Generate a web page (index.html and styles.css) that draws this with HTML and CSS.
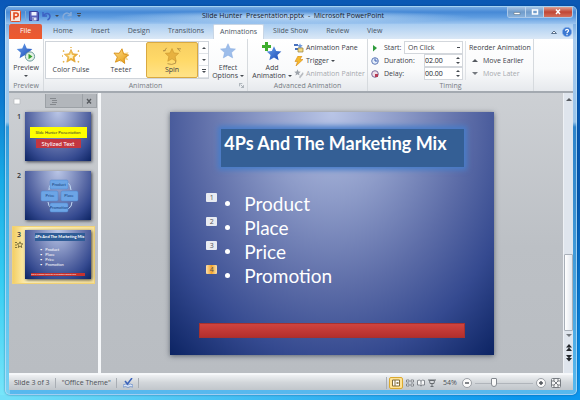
FILE: index.html
```html
<!DOCTYPE html>
<html lang="en">
<head>
<meta charset="utf-8">
<title>Slide Hunter Presentation.pptx - Microsoft PowerPoint</title>
<link rel="stylesheet" href="styles.css">
</head>
<body>
<svg class="defs" aria-hidden="true">
  <defs>
    <linearGradient id="blue" x1="0" y1="0" x2="1" y2="1"><stop offset="0" stop-color="#6ba4ee"/><stop offset="1" stop-color="#1746b4"/></linearGradient>
    <linearGradient id="gold" x1="0" y1="0" x2="1" y2="1"><stop offset="0" stop-color="#ffe08a"/><stop offset="1" stop-color="#e59a10"/></linearGradient>
    <symbol id="star" viewBox="0 0 20 20"><path d="M10 1l2.7 6 6.5.6-4.9 4.4 1.5 6.5L10 15.100l-5.800 3.400 1.500-6.500L.8 7.600 7.300 7z"/></symbol>
  </defs>
</svg>
<div class="window">
  <header class="titlebar">
    <div class="quick">
      <svg class="i12" viewBox="0 0 12 12"><rect x=".5" y=".5" width="10" height="11" rx="1" fill="#fbe6dc" stroke="#d9512c"/><path d="M4 9.500V3h2.300a1.800 1.800 0 010 3.800H4" fill="none" stroke="#e0481e" stroke-width="1.600"/></svg>
      <span class="qsep"></span>
      <button aria-label="Save"><svg class="i10" viewBox="0 0 10 10"><path d="M.5.5h8l1 1v8h-9z" fill="#5a62bb" stroke="#38419c"/><path d="M2.500 1h5v3.500h-5z" fill="#eef3ff"/><path d="M3 6.500h4.500V9.500H3z" fill="#dce3f6"/><path d="M3.500 7h1v2h-1z" fill="#38419c"/></svg></button>
      <button aria-label="Undo"><svg class="i10" viewBox="0 0 10 10"><path d="M1 1v4h4M1.500 4.500C4 1.500 8 2 8 5.500 8 7.500 6.500 8.500 5.500 9" fill="none" stroke="#3d62c4" stroke-width="1.500"/></svg></button>
      <i class="down"></i>
      <button aria-label="Redo"><svg class="i10" viewBox="0 0 10 10"><path d="M9 1v3.500H5.500M8.500 4A4 4 0 109 7" fill="none" stroke="#86abd8" stroke-width="1.500"/></svg></button>
      <i class="down bar"></i>
    </div>
    <h1>Slide Hunter  Presentation.pptx  -  Microsoft PowerPoint</h1>
    <div class="winbtns">
      <button aria-label="Minimize"><svg viewBox="0 0 10 8"><path d="M2 4.500h6v2H2z" fill="#fff" stroke="#567" stroke-width=".5"/></svg></button>
      <button aria-label="Restore"><svg viewBox="0 0 10 8"><path d="M2.500 2h5v4h-5z" fill="none" stroke="#fff" stroke-width="1.500"/></svg></button>
      <button class="close" aria-label="Close"><svg viewBox="0 0 10 8"><path d="M3 1.500l4 4.500M7 1.500L3 6" stroke="#fff" stroke-width="1.500"/></svg></button>
    </div>
  </header>
  <nav class="tabs">
    <a class="file" href="#file">File</a>
    <a href="#home">Home</a><a href="#insert">Insert</a><a href="#design">Design</a><a href="#transitions">Transitions</a>
    <a class="on" href="#animations">Animations</a><a href="#show">Slide Show</a><a href="#review">Review</a><a href="#view">View</a>
    <div class="help">
      <button aria-label="Minimize the ribbon"><svg class="i8" viewBox="0 0 8 8"><path d="M1.500 5.500L4 3l2.500 2.500z" fill="#fff" stroke="#5d738e"/></svg></button>
      <button aria-label="Help"><svg class="i10" viewBox="0 0 10 10"><circle cx="5" cy="5" r="4.700" fill="#3b78d2" stroke="#8db6ec" stroke-width=".6"/><path d="M3.500 3.800C3.600 2 6.600 2 6.500 3.800 6.500 4.800 5 4.900 5 6.200M5 7v1.200" fill="none" stroke="#fff" stroke-width="1.200"/></svg></button>
    </div>
  </nav>

  <section class="ribbon">
    <div class="group preview">
      <div class="body">
        <button class="big"><svg class="i20" viewBox="0 0 20 20"><use href="#star" width="17" height="18" fill="url(#blue)"/><circle cx="14" cy="14.500" r="4.600" fill="#e4f1e4" stroke="#6b9a9d"/><path d="M12.500 11.800l4 2.700-4 2.700z" fill="#35a02d"/></svg><span>Preview</span><i class="down"></i></button>
      </div>
      <h2>Preview</h2>
    </div>
    <div class="group anim">
      <div class="body">
        <div class="gallery">
          <button><svg class="i18" viewBox="0 0 20 20"><use href="#star" x="2" y="2" width="16" height="16" fill="url(#gold)" stroke="#dda032"/><use href="#star" x="6" y="6" width="8" height="8" fill="#fff6cf"/><path d="M10 0v1M1 4l1.500 1M19 4l-1.500 1M1 17l1.500-1M19 17l-1.500-1M0 10h1M19 10h1" stroke="#e5ad3c" stroke-width="1.500"/></svg><span>Color Pulse</span></button>
          <button><svg class="i18" viewBox="0 0 20 20"><use href="#star" x="4" y="1" width="16" height="18" fill="#f4d486" transform="rotate(-15 10 10)"/><use href="#star" x="1" y="1" width="18" height="18" fill="url(#gold)" stroke="#d68c14" transform="rotate(8 10 10)"/></svg><span>Teeter</span></button>
          <button class="sel"><svg class="i18" viewBox="0 0 20 20"><use href="#star" x="2" y="1" width="16" height="16" fill="#e7b140" stroke="#cf9a32"/><path d="M1 5l3-4M0 4h3M19 5l-3-4M20 2h-4M5 18.500q5 2 9-.5M14 15v3" fill="none" stroke="#b08d45"/></svg><span>Spin</span></button>
          <div class="scroll">
            <button aria-label="Previous row"><i class="up"></i></button><button aria-label="Next row"><i class="down"></i></button><button aria-label="More"><i class="down bar"></i></button>
          </div>
        </div>
        <button class="big effect"><svg class="i18" viewBox="0 0 20 20"><use href="#star" x="1" y="1" width="18" height="18" fill="#9dbdea" stroke="#85aadf" stroke-width=".6"/></svg><span>Effect</span><span>Options <i class="down"></i></span></button>
      </div>
      <h2>Animation</h2>
      <svg class="launch" viewBox="0 0 6 6"><path d="M.5 4V.5H4M2 2l3 3M5.500 2.500v3h-3" fill="none" stroke="#8a929c" stroke-width=".8"/></svg>
    </div>
    <div class="group adv">
      <div class="body">
        <button class="big add"><svg class="i20" viewBox="0 0 20 20"><use href="#star" x="4" y="3" width="16" height="17" fill="url(#blue)"/><path d="M4.500 0v9M0 4.500h9" stroke="#3fae2e" stroke-width="3"/></svg><span>Add</span><span>Animation <i class="down"></i></span></button>
        <div class="rows">
          <button><svg class="i10" viewBox="0 0 10 10"><path d="M0 1h4v2H0zM1 5h3v2H1z" fill="#4771bd"/><use href="#star" x="3" y="0" width="6" height="6" fill="#6d98dc"/><path d="M4 5h5v4H4z" fill="#f5d980" stroke="#94803e" stroke-width=".7"/></svg>Animation Pane</button>
          <button><svg class="i10" viewBox="0 0 10 10"><path d="M4 0h4L6 3.500h3L2 10l1.500-4.500H1z" fill="#f5b92d" stroke="#d58a1b" stroke-width=".6"/></svg>Trigger <i class="down"></i></button>
          <button disabled><svg class="i10" viewBox="0 0 10 10"><use href="#star" width="7" height="7" fill="#9ea4ab"/><path d="M9 3L5 8l1 1.500L9.500 5z" fill="#b7bbc0"/></svg>Animation Painter</button>
        </div>
      </div>
      <h2>Advanced Animation</h2>
    </div>
    <div class="group timing">
      <div class="body">
        <div class="fields">
          <label for="start"><svg class="i8" viewBox="0 0 8 8"><path d="M2 1l4 3-4 3.500z" fill="#2f9b3c"/></svg>Start:</label>
          <select id="start"><option>On Click</option></select>
          <label for="dur"><svg class="i8" viewBox="0 0 8 8"><circle cx="4" cy="4" r="3.300" fill="#e3edfb" stroke="#6079b5"/><path d="M4 1.500V4h2.500" fill="none" stroke="#3a5db0"/></svg>Duration:</label>
          <div class="spin"><input id="dur" value="02.00"><span><i class="up"></i><i class="down"></i></span></div>
          <label for="del"><svg class="i8" viewBox="0 0 8 8"><circle cx="4" cy="4" r="3.300" fill="#f0dfe8" stroke="#7d6c9c"/><path d="M4 1v3h3v3H4z" fill="#b63b54"/></svg>Delay:</label>
          <div class="spin"><input id="del" value="00.00"><span><i class="up"></i><i class="down"></i></span></div>
        </div>
        <div class="rows reorder">
          <span>Reorder Animation</span>
          <button><i class="tri"></i>Move Earlier</button>
          <button disabled><i class="tri flip"></i>Move Later</button>
        </div>
      </div>
      <h2>Timing</h2>
    </div>
  </section>

  <main class="work">
    <aside class="side">
      <div class="sidetabs">
        <button class="on" aria-label="Slides"><svg class="i8" viewBox="0 0 8 8"><path d="M1 2h6v5H1z" fill="#fff" stroke="#b4b7bb" stroke-width=".7"/></svg></button>
        <button aria-label="Outline"><svg class="i8" viewBox="0 0 8 8"><path d="M0 1.500h6M2 3.500h5M2 5.500h5M0 7.500h6" stroke="#85898e"/></svg></button>
        <button class="x" aria-label="Close pane"><svg class="i8" viewBox="0 0 8 8"><path d="M2 2l4 4.500M6 2L2 6.500" stroke="#55595e" stroke-width="1.300"/></svg></button>
      </div>
      <ol class="thumbs">
        <li><b>1</b><div class="mini m1"><span class="yel">Slide Hunter Presentation</span><span class="red">Stylized Text</span></div></li>
        <li><b>2</b><div class="mini m2"><svg viewBox="0 0 66 49"><path d="M24 19q0-6 5-8M42 11q4 3 4 8M23 31q0 4 4 7M47 31q0 5-4 7" fill="none" stroke="#c3dcf5"/><g fill="#6ca5e6" stroke="#4d85cf" stroke-width=".5"><rect x="25" y="9" width="18" height="9" rx="1.500"/><rect x="16" y="20" width="17" height="10" rx="1.500"/><rect x="36" y="20" width="17" height="10" rx="1.500"/><rect x="25" y="32" width="18" height="9" rx="1.500"/></g><g class="nodes"><text x="34" y="15">Product</text><text x="25" y="26">Price</text><text x="44" y="26">Place</text><text x="34" y="38">Promotion</text></g></svg></div></li>
        <li class="cur"><b>3<svg class="i8" viewBox="0 0 8 8"><path d="M5 .8l.8 2 2 .1-1.600 1.400.6 2.200L5 5.300 3.200 6.500l.6-2.200L2.200 2.900l2-.1zM0 1.500h2M0 4h2M0 6.500h2" fill="none" stroke="#665a2c" stroke-width=".8"/></svg></b><div class="mini m3"><span class="mt">4Ps And The Marketing Mix</span><ul><li>Product</li><li>Place</li><li>Price</li><li>Promotion</li></ul><span class="mb">This is a sample text with an animation applied here</span></div></li>
      </ol>
    </aside>
    <div class="stage">
      <article class="slide">
        <h3>4Ps And The Marketing Mix</h3>
        <ul class="points">
          <li><em>1</em><span>Product</span></li>
          <li><em>2</em><span>Place</span></li>
          <li><em>3</em><span>Price</span></li>
          <li><em class="hot">4</em><span>Promotion</span></li>
        </ul>
        <div class="strip"></div>
      </article>
    </div>
    <div class="vbar">
      <i class="tri"></i>
      <div class="track"><div class="thumb"></div></div>
      <i class="tri flip"></i>
      <svg viewBox="0 0 8 24"><path d="M4 4L7 7.500H1zM4 7.500L7 11H1zM1 15h6L4 18.500zM1 18h6L4 21.500z" fill="#23272c"/></svg>
    </div>
  </main>

  <footer class="status">
    <span>Slide 3 of 3</span><span>"Office Theme"</span>
    <span class="proof"><svg class="i10" viewBox="0 0 10 10"><path d="M0 7q3-2 5 0 2-2 5 0v2Q7 8 5 9.500 3 8 0 9z" fill="#dbe6f8" stroke="#5c82c1" stroke-width=".7"/><path d="M2 3l2.500 3L9 0" fill="none" stroke="#3a62ba" stroke-width="1.500"/></svg></span>
    <div class="views">
      <button class="on" aria-label="Normal"><svg class="i8" viewBox="0 0 8 8"><path d="M.5 1h7v6h-7zM3 1v6" fill="#fff" stroke="#836c37"/><path d="M4.500 3h2v2h-2z" fill="#94835a"/></svg></button>
      <button aria-label="Slide Sorter"><svg class="i8" viewBox="0 0 8 8"><path d="M.5 1h2.500v2H.5zM5 1h2.500v2H5zM.5 5h2.500v2H.5zM5 5h2.500v2H5z" fill="#fff" stroke="#6b7076" stroke-width=".8"/></svg></button>
      <button aria-label="Reading View"><svg class="i8" viewBox="0 0 8 8"><path d="M.5 1.500q2-1 3.500.5 1.500-1.500 3.500-.5V6Q5.500 5.500 4 7 2.500 5.500.5 6zM4 2v5" fill="#f7f8f9" stroke="#6b7076" stroke-width=".8"/></svg></button>
      <button aria-label="Slide Show"><svg class="i8" viewBox="0 0 8 8"><path d="M0 1h8M1.500 1.500h5L6 4.500H2z M4 4.500V7M2.500 7.500h3" fill="#d9dcdf" stroke="#5f6469" stroke-width=".9"/></svg></button>
      <output>54%</output>
      <button aria-label="Zoom out"><svg class="i10" viewBox="0 0 10 10"><circle cx="5" cy="5" r="4.500" fill="#fafafa" stroke="#888d94" stroke-width=".8"/><path d="M3 5h4" stroke="#4d5258" stroke-width="1.400"/></svg></button>
      <input type="range" aria-label="Zoom" min="0" max="100" value="30">
      <button aria-label="Zoom in"><svg class="i10" viewBox="0 0 10 10"><circle cx="5" cy="5" r="4.500" fill="#fafafa" stroke="#888d94" stroke-width=".8"/><path d="M3 5h4M5 3v4" stroke="#4d5258" stroke-width="1.400"/></svg></button>
      <button class="fit" aria-label="Fit slide to window"><svg class="i10" viewBox="0 0 10 10"><rect x=".5" y=".5" width="9" height="9" rx="1" fill="#f4f5f6" stroke="#777c82"/><path d="M2 4V2h2M6 2h2v2M8 6v2H6M4 8H2V6M3 3l4 4M7 3L3 7" fill="none" stroke="#5b6066" stroke-width=".8"/></svg></button>
    </div>
  </footer>
</div>
</body>
</html>
```
FILE: styles.css
```css
* { box-sizing: border-box; margin: 0; padding: 0; }
body {
  min-height: 100vh;
  display: flex;
  padding: 6px 3px 5px 5px;
  background:
    linear-gradient(90deg, #72dff8 0, rgba(60, 190, 245, 0) 90%) 0 100% / 100% 5px no-repeat,
    linear-gradient(180deg, #0b57b8 0, #0c7bd0 25%, #18abe6 45%, #35cdf2 70%, #7ae6fa 100%) 0 0 / 10px 100% no-repeat,
    linear-gradient(180deg, #0a58b4 0, #0659b0 50%, #0b97ee 100%);
  font: 7px/10px "Open Sans", "Noto Sans", sans-serif;
  color: #3c4148;
}
button, input, select { font: inherit; color: inherit; border: 0; background: none; }
button { display: flex; align-items: center; white-space: nowrap; }
button:disabled { color: #a6a9ae; }
a { color: inherit; text-decoration: none; }
ul, ol { list-style: none; }
svg { display: block; flex: none; }
.defs { position: absolute; width: 0; height: 0; }
.i8 { width: 8px; height: 8px; }
.i10 { width: 10px; height: 10px; }
.i12 { width: 12px; height: 12px; }
.i18 { width: 18px; height: 18px; }
.i20 { width: 20px; height: 20px; }

.down, .up, .tri { display: inline-block; flex: none; width: 0; height: 0; border: 2px solid transparent; }
.down { border-top-color: #454a50; border-bottom: 0; vertical-align: middle; }
.up { border-bottom-color: #454a50; border-top: 0; }
.down.bar { position: relative; }
.down.bar::before { content: ""; position: absolute; left: -2px; top: -4px; width: 4px; height: 1px; background: #454a50; }
.tri { border-width: 3px; border-top: 0; border-bottom-color: #555a61; }
.tri.flip { border-top: 3px solid #74797f; border-bottom: 0; }

.window {
  flex: 1;
  display: flex;
  flex-direction: column;
  padding: 0 3px 4px;
  border: 1px solid rgba(190, 225, 250, .75);
  border-radius: 5px;
  background:
    linear-gradient(180deg, #4a8fd8 0, #a9cdf0 32px, rgba(170, 208, 240, .9) 115px, rgba(70, 160, 220, .6) 120px, rgba(120, 200, 240, .7) 100%);
  box-shadow: 0 0 2px rgba(0, 40, 90, .6);
}

.titlebar {
  display: grid;
  grid-template-columns: 1fr auto 1fr;
  align-items: start;
  height: 17px;
  margin: 0 -3px;
  padding-left: 4px;
  border-radius: 4px 4px 0 0;
  background:
    radial-gradient(ellipse at 50% 60%, rgba(225, 240, 252, .75), rgba(225, 240, 252, 0) 45%),
    linear-gradient(180deg, #74a9e2 0, #4689d6 30%, #5f9de0 60%, #9dc5ef 100%);
}
.quick { display: flex; align-items: center; gap: 3px; height: 17px; }
.quick .bar { margin-left: 2px; }
.qsep { width: 1px; height: 10px; background: #7fa7d4; }
.titlebar h1 { font-size: 7px; line-height: 17px; font-weight: 400; white-space: pre; color: #16212e; }
.winbtns { display: flex; justify-self: end; margin-right: 3px; height: 11px; border: 1px solid #a9c7e8; border-top: 0; border-radius: 0 0 3px 3px; overflow: hidden; }
.winbtns button { justify-content: center; width: 18px; background: linear-gradient(#a8c4e2, #6f9bcb 50%, #89b2dc); border-right: 1px solid #bcd4ec; }
.winbtns svg { width: 10px; height: 8px; }
.winbtns .close { width: 28px; border: 0; background: linear-gradient(#dda295, #c04634 50%, #d4705c); }

.tabs { display: flex; height: 15px; background: linear-gradient(#a9cdf1, #dbe8f6); }
.tabs a { line-height: 14px; padding: 0 9px; color: #4a5563; }
.tabs a.file { padding: 0 11px; margin-right: 2px; color: #fff; border-radius: 2px 2px 0 0; background: linear-gradient(#e0593a, #ee5a2e); }
.tabs a.on { padding: 0 6px; background: #fff; border-radius: 2px 2px 0 0; border: 1px solid #c9d6e5; border-bottom: 0; }
.help { display: flex; align-items: center; gap: 4px; margin-left: auto; padding-right: 1px; }

.ribbon { display: flex; height: 54px; background: linear-gradient(#fff, #f9fafb 60%, #e6e9ed); border-bottom: 2px solid #a3a9b0; }
.group { position: relative; display: flex; flex-direction: column; border-right: 1px solid #d6dade; padding-top: 2px; }
.group .body { flex: 1; display: flex; }
.group h2 { font-size: 7px; line-height: 11px; font-weight: 400; text-align: center; color: #767c84; }
.preview { width: 35px; }
.anim { width: 204px; }
.adv { width: 120px; }
.timing { width: 166px; }
.preview .body { justify-content: center; }
.big { flex-direction: column; line-height: 8px; padding-top: 1px; }
.big > span { line-height: 8px; }
.big svg { margin-bottom: 2px; }
.preview .big .down { margin-top: 3px; }
.gallery { display: flex; width: 164px; height: 38px; margin-left: 1px; border: 1px solid #cfd4da; background: #fff; }
.gallery > button { flex: 1; flex-direction: column; justify-content: center; gap: 1px; line-height: 8px; }
.gallery > .sel { border: 1px solid #d9a941; border-radius: 2px; background: linear-gradient(#f8cf62, #ffd968 50%, #ffe389); }
.gallery .scroll { display: grid; width: 10px; border-left: 1px solid #cfd4da; }
.scroll button { justify-content: center; border-bottom: 1px solid #dfe3e7; }
.effect { width: 38px; }
.add { width: 44px; margin-left: 2px; }
.effect svg { margin-bottom: 4px; }
.launch { position: absolute; right: 3px; bottom: 3px; width: 5px; height: 5px; }
.rows { display: grid; grid-auto-rows: 13px; align-items: center; }
.rows button { gap: 2px; }
.timing .body { gap: 2px; padding-left: 3px; }
.fields { display: grid; grid-template: repeat(3, 13px) / 1fr auto; align-items: center; width: 92px; }
.fields label { display: flex; align-items: center; gap: 5px; }
.fields select { appearance: none; width: 59px; height: 13px; padding-left: 3px; margin-left: -20px; border: 1px solid #d3d7dc; background: linear-gradient(#454a50, #454a50) 52px 5px / 3px 1px no-repeat #fff; }
.spin { display: flex; height: 13px; width: 39px; border: 1px solid #d3d7dc; background: #fff; }
.spin input { width: 31px; min-width: 0; outline: 0; color: #16191d; }
.spin span { display: grid; align-content: center; gap: 3px; }
.reorder { border-left: 1px solid #dfe2e6; padding-left: 3px; flex: none; white-space: nowrap; }
.reorder button { gap: 5px; padding-left: 3px; }

.work { flex: 1; display: flex; background: linear-gradient(#cdd0d4, #bcc0c5 55%, #b9bdc2); border-bottom: 2px solid #f6f8fa; }
.side { width: 92px; padding-right: 1px; border-right: 3px solid #f6f8fa; }
.sidetabs { display: flex; height: 14px; margin-top: 1px; }
.sidetabs button { flex: 1; padding-left: 4px; background: #b2b6bb; border-right: 1px solid #9ca1a6; border-bottom: 1px solid #9ca1a6; }
.sidetabs .on { background: none; border-bottom: 0; }
.sidetabs .x { flex: none; width: 14px; padding: 0 2px; }
.thumbs { padding: 0 2px 0 3px; }
.thumbs > li { display: grid; grid-template-columns: 12px 66px; padding: 3px 3px 4px 0; margin-bottom: 1px; border: 1px solid transparent; }
.thumbs > .cur { border-color: #f2d376; background: linear-gradient(90deg, #f3cf67, #fff2b8 14px, #f8e29a); }
.thumbs b { display: grid; gap: 1px; align-content: start; justify-items: center; font-weight: 600; color: #30343a; }
.mini, .slide { background: radial-gradient(ellipse 75% 130% at 50% 0, #b9c5e6 0, #8d9bc8 28%, #5c6ca7 56%, #354a90 78%, #08205f 104%); box-shadow: 1px 1px 3px rgba(30, 35, 50, .8); }
.mini { height: 49px; display: flex; flex-direction: column; font: 3px/4px "Lato", sans-serif; color: #fff; overflow: hidden; }
.m1 { align-items: center; padding-top: 15px; font-size: 4px; }
.yel { width: 57px; line-height: 11px; text-align: center; background: #ff0; color: #333; white-space: nowrap; }
.red { width: 45px; margin-top: 1px; background: #c33640; text-align: center; font-size: 6px; line-height: 9px; }
.nodes { font-size: 4px; text-anchor: middle; fill: #183e78; }
.m3 { padding: 3px 6px 3px; justify-content: space-between; }
.mt { margin-left: 4px; background: #2f5d97; font-size: 4px; font-weight: 700; line-height: 8px; white-space: nowrap; }
.m3 ul { padding-left: 9px; font-size: 4px; line-height: 5px; }
.m3 li { display: flex; gap: 3px; }
.m3 li::before { content: "•"; }
.mb { background: #c5322e; font-size: 2px; line-height: 3px; white-space: nowrap; overflow: hidden; }

.stage { flex: 1; display: grid; place-items: center; }
.slide { width: 70%; padding: 17px 29px; font-family: "Lato", sans-serif; color: #fff; box-shadow: 0 1px 5px rgba(50, 60, 75, .7); }
.slide h3 { height: 38px; margin: 0 1px 0 22px; padding: 0 3px; font-size: 18px; line-height: 28px; font-weight: 700; white-space: nowrap; background: #345f95; box-shadow: 0 0 5px 3px #487cc8; }
.points { margin: 25px 0 35px 7px; }
.points li { display: flex; gap: 8px; height: 24px; font-size: 19px; line-height: 23px; }
.points span { display: flex; align-items: center; gap: 14px; }
.points span::before { content: ""; width: 5px; height: 5px; border-radius: 50%; background: #fff; }
.points em { width: 11px; height: 9px; margin-top: 1px; border-radius: 1px; background: #e8ebf1; color: #555; font: 7px/9px "Open Sans", sans-serif; text-align: center; }
.points .hot { background: linear-gradient(90deg, #fbe0ac, #f5a52c 50%, #fbe0ac); }
.strip { height: 15px; background: linear-gradient(#cf433e, #b42f2d); border: 1px solid #a6322f; }

.vbar { display: flex; flex-direction: column; align-items: center; width: 10px; padding-top: 5px; background: #dfe5ed; border-left: 1px solid #eef1f5; gap: 3px; }
.track { flex: 1; width: 9px; display: flex; flex-direction: column; justify-content: flex-end; }
.track .thumb { height: 34%; border: 1px solid #a9b0b9; border-radius: 1px; background: linear-gradient(90deg, #fff, #e2e7ee); }
.vbar svg { width: 8px; height: 24px; margin-bottom: 9px; }

.status { display: flex; align-items: center; height: 15px; padding-left: 5px; color: #4c5157; background: linear-gradient(#eff1f3, #d2d6da 50%, #c1c6cb); }
.status > span { padding-right: 5px; margin-right: 6px; border-right: 1px solid #a9aeb4; }
.views { display: flex; align-items: center; gap: 3px; margin-left: auto; padding-right: 12px; border-left: 1px solid #a9aeb4; padding-left: 2px; }
.views .on { padding: 1px 2px; border: 1px solid #dba92f; border-radius: 2px; background: #ffe394; }
.views output { width: 16px; margin: 0 0 0 4px; }
.views input { appearance: none; width: 58px; height: 10px; background: linear-gradient(#b0b5bb, #b0b5bb) 0 5px / 100% 1px no-repeat; }
.views input::-webkit-slider-thumb { appearance: none; width: 6px; height: 9px; border: 1px solid #82878e; border-radius: 1px 1px 3px 3px; background: #fafafa; }
.views .fit { margin-left: 2px; }
```
